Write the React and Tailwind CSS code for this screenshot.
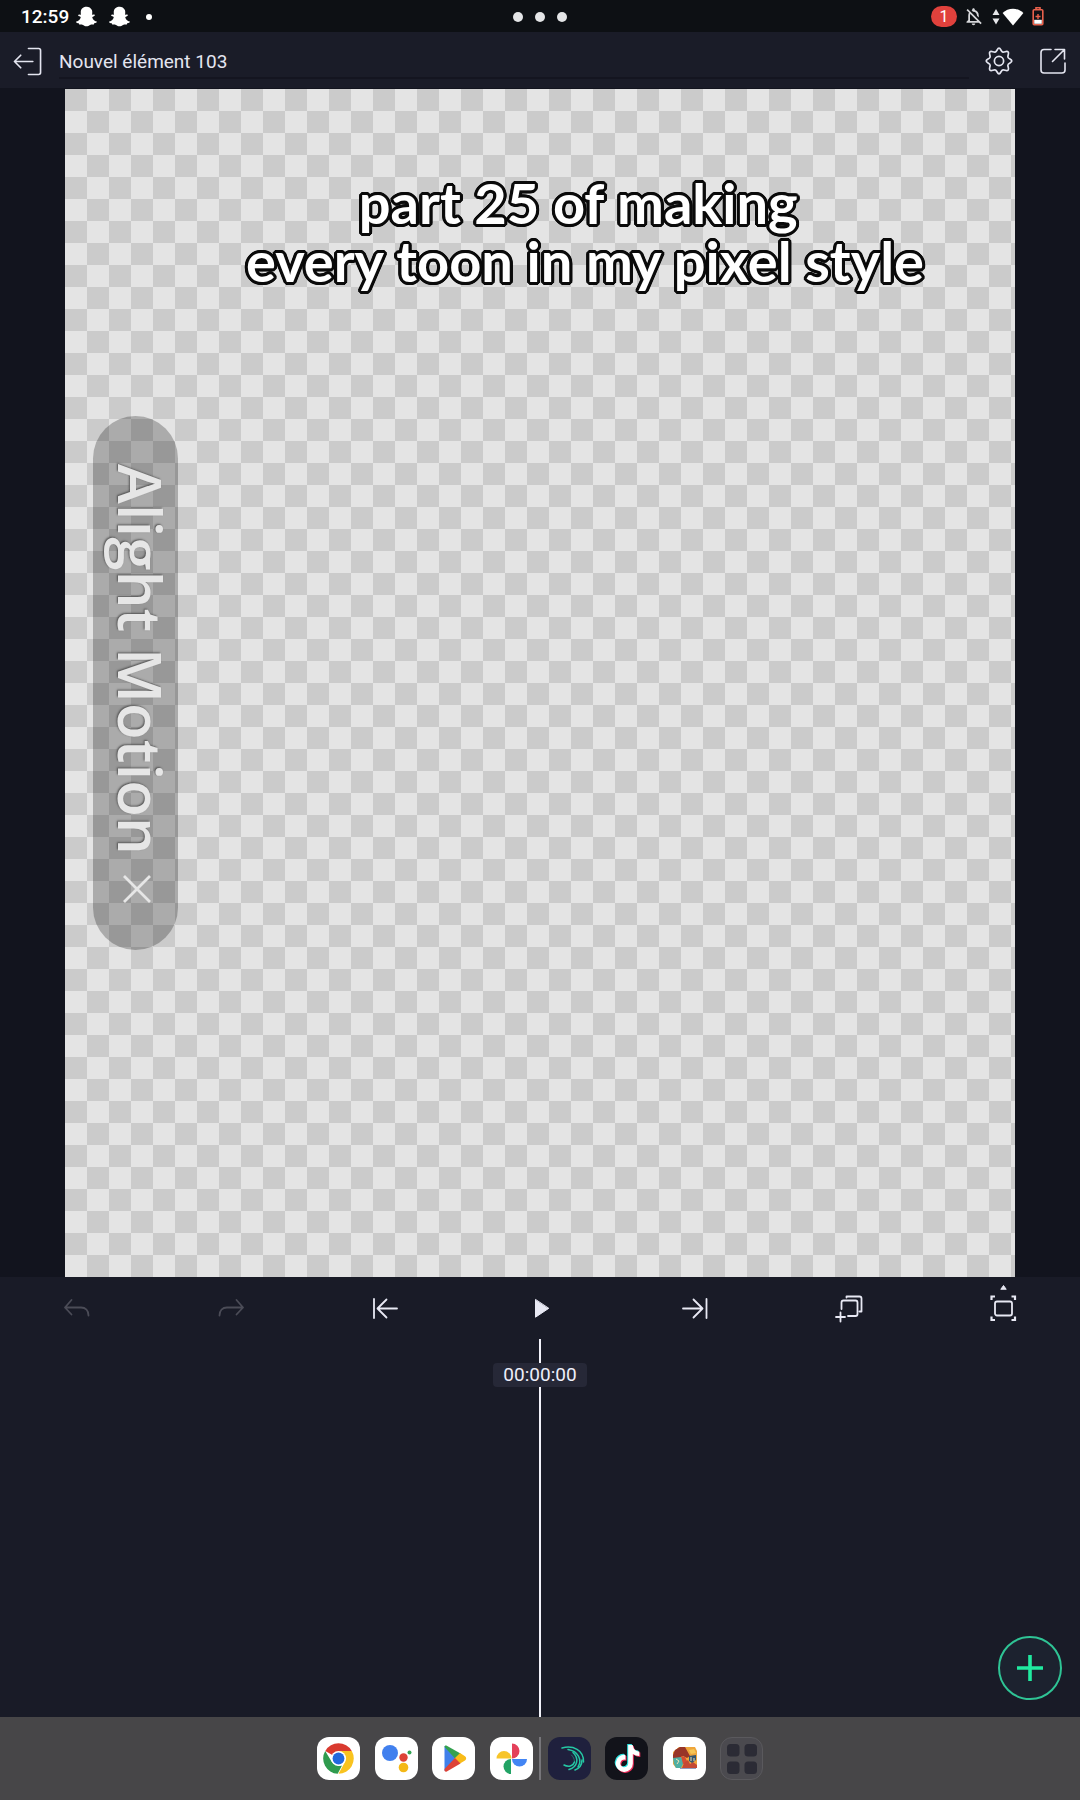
import React, { useState } from "react";
import { FaSnapchatGhost, FaTiktok } from "react-icons/fa";
import { MdOutlineNotificationsOff } from "react-icons/md";

const StatusBar = () => (
  <div className="grid h-8 grid-cols-3 items-center bg-[#0d1014] text-white">
    <div className="flex items-center pl-[21px]">
      <span className="pt-px text-[19px] leading-8 font-medium">12:59</span>
      <FaSnapchatGhost className="ml-[7px] size-[21px]" />
      <FaSnapchatGhost className="ml-3 size-[21px]" />
      <span className="ml-4 size-[6px] rounded-full bg-white" />
    </div>
    <div className="flex justify-center gap-3">
      <span className="size-[10px] rounded-full bg-[#e4e5e7]" />
      <span className="size-[10px] rounded-full bg-[#e4e5e7]" />
      <span className="size-[10px] rounded-full bg-[#e4e5e7]" />
    </div>
    <div className="flex items-center justify-end pr-9">
      <span className="flex h-[21px] w-[26px] items-center justify-center rounded-full bg-[#e0413c] text-[16px] leading-5">
        1
      </span>
      <MdOutlineNotificationsOff className="ml-[6px] size-[21px] text-[#d6d7da]" />
      <svg viewBox="0 0 8 18" className="ml-2 h-[18px] w-2" fill="#e6e7ea">
        <path d="M4 1L7.500 7H.5z M4 16.500L.5 10.500h7z" />
      </svg>
      <svg viewBox="0 0 22 18" className="ml-[2px] h-[18px] w-[22px]" fill="#fff">
        <path d="M11 17.500L.6 5C3.500 2.300 7 .8 11 .8S18.500 2.300 21.400 5z" />
      </svg>
      <svg viewBox="0 0 12 19" className="ml-2 h-[19px] w-3" fill="none">
        <path d="M4 2.500V.8h4v1.700" stroke="#e8614c" strokeWidth="1.600" />
        <rect x="1.200" y="2.800" width="9.600" height="15" rx="1" stroke="#e8614c" strokeWidth="1.600" />
        <path d="M6 7v5M3.500 9.500h5" stroke="#e8614c" strokeWidth="1.400" />
        <path d="M2.200 12.800h7.600v4H2.200z" fill="#fff" />
      </svg>
    </div>
  </div>
);

const Header = () => {
  const [title, setTitle] = useState("Nouvel élément 103");

  return (
    <header className="flex h-14 items-center bg-[#1a1c28] px-[13px] pt-[2px] text-[#e4e5f0]">
      <button aria-label="Retour">
        <svg viewBox="0 0 30 30" className="size-[29px]" fill="none" stroke="currentColor" strokeWidth="1.700" strokeLinecap="round" strokeLinejoin="round">
          <path d="M16 1.500h10.500a2 2 0 0 1 2 2v23a2 2 0 0 1-2 2H16M20.500 15H1.500M8 8.500L1.500 15 8 21.500" />
        </svg>
      </button>
      <input
        aria-label="Nom du projet"
        className="ml-[17px] h-9 min-w-0 flex-1 border-b-2 border-[#141520] bg-transparent pt-[2px] text-[19px] leading-8 outline-none"
        value={title}
        onChange={(e) => setTitle(e.target.value)}
      />
      <button aria-label="Réglages" className="ml-4">
        <svg viewBox="0 0 28 28" className="size-7" fill="none" stroke="currentColor" strokeWidth="1.700" strokeLinejoin="round">
          <circle cx="14" cy="14" r="4.600" />
          <path d="M14 1.200C15.800 1.200 15.900 4.700 17.900 5.100C19.600 5.500 21.800 3.500 23.100 4.900C24.500 6.200 22.500 8.400 22.900 10.100C23.300 12.100 26.800 12.200 26.800 14C26.800 15.800 23.300 15.900 22.900 17.900C22.500 19.600 24.500 21.800 23.100 23.100C21.800 24.500 19.600 22.500 17.900 22.900C15.900 23.300 15.800 26.800 14 26.800C12.200 26.800 12.100 23.300 10.100 22.900C8.400 22.500 6.200 24.500 4.900 23.100C3.500 21.800 5.500 19.600 5.100 17.900C4.700 15.900 1.200 15.800 1.200 14C1.200 12.200 4.700 12.100 5.100 10.100C5.500 8.400 3.500 6.200 4.900 4.900C6.200 3.500 8.400 5.500 10.100 5.100C12.100 4.700 12.200 1.200 14 1.200z" />
        </svg>
      </button>
      <button aria-label="Exporter" className="ml-[26px]">
        <svg viewBox="0 0 28 28" className="size-7" fill="none" stroke="currentColor" strokeWidth="1.600" strokeLinecap="round" strokeLinejoin="round">
          <path d="M12 2.500H5a3 3 0 0 0-3 3V23a3 3 0 0 0 3 3h18a3 3 0 0 0 3-3v-7M13.500 14.500L25.500 2.500M16 2.500h9.500V12" />
        </svg>
      </button>
    </header>
  );
};

const Canvas = () => (
  <main className="relative mx-[65px] mt-px aspect-[950/1188] overflow-hidden bg-[conic-gradient(#e4e4e4_25%,#cbcbcb_0_50%,#e4e4e4_0_75%,#cbcbcb_0)] bg-[size:44px_44px]">
    {/* légende de la vidéo */}
    <h1 className="pt-[85px] pl-[90px] text-center font-['Lato',sans-serif] text-[56px] leading-[58px] font-bold whitespace-pre text-white [text-shadow:3px_0_#0a0a0a,-3px_0_#0a0a0a,0_3px_#0a0a0a,0_-3px_#0a0a0a,3px_1px_#0a0a0a,3px_-1px_#0a0a0a,-3px_1px_#0a0a0a,-3px_-1px_#0a0a0a,1px_3px_#0a0a0a,-1px_3px_#0a0a0a,1px_-3px_#0a0a0a,-1px_-3px_#0a0a0a,2px_2px_#0a0a0a,-2px_2px_#0a0a0a,2px_-2px_#0a0a0a,-2px_-2px_#0a0a0a]">
      {"part 25 of making\u00a0\nevery toon in my pixel style"}
    </h1>
    {/* filigrane */}
    <div className="absolute top-[327px] left-7 flex h-[534px] w-[85px] flex-col items-center rounded-full bg-black/25 pt-12 pl-[2px] text-[#e6e6e6]">
      <span className="pl-2 font-['Open_Sans',sans-serif] text-[60px] leading-[85px] font-semibold [writing-mode:vertical-rl] [text-shadow:-1px_1px_2px_#555]">
        Alight Motion
      </span>
      <button aria-label="Retirer le filigrane" className="mt-5">
        <svg viewBox="0 0 28 28" className="size-7" fill="none" stroke="currentColor" strokeWidth="2.800">
          <path d="M1 1l26 26M27 1L1 27" />
        </svg>
      </button>
    </div>
  </main>
);

const ToolButton = ({ label, children, className = "text-[#e8e9f4]" }) => (
  <button aria-label={label} className={"flex h-[62px] items-center justify-center " + className}>
    <svg viewBox="0 0 32 48" className="h-12 w-8" fill="none" stroke="currentColor" strokeWidth="1.800" strokeLinecap="round" strokeLinejoin="round">
      {children}
    </svg>
  </button>
);

const Toolbar = () => (
  <div className="grid grid-cols-7">
    <ToolButton label="Annuler" className="text-[#4b4c57]">
      <path d="M10.500 16L4 23.500l6.500 7M4 23.500h16c4.500 0 7.500 3 7.500 8" />
    </ToolButton>
    <ToolButton label="Rétablir" className="text-[#4b4c57]">
      <path d="M21.500 16l6.500 7.500-6.500 7M28 23.500H12c-4.500 0-7.500 3-7.500 8" />
    </ToolButton>
    <ToolButton label="Aller au début">
      <path d="M4 15v19M27 24.500H8M16.500 15.500L7.500 24.500l9 9" />
    </ToolButton>
    <ToolButton label="Lecture">
      <path d="M11.500 15.800v17.400L24.500 24.500z" fill="currentColor" strokeWidth="1" />
    </ToolButton>
    <ToolButton label="Aller à la fin">
      <path d="M28.500 15v19M5 24.500h19M15.500 15.500l9 9-9 9" />
    </ToolButton>
    <ToolButton label="Dupliquer">
      <path d="M8.500 25v-6.500a2 2 0 0 1 2-2H22.500a2 2 0 0 1 2 2V30a2 2 0 0 1-2 2H15M13.500 13.500v-1h13a2 2 0 0 1 2 2v13h-2M7.500 28.500v9M3 33h9" />
    </ToolButton>
    <ToolButton label="Ajuster la vue">
      <path d="M14 5L16.500 1.500 19 5z" fill="currentColor" strokeWidth="1" />
      <rect x="8" y="17.500" width="17" height="14" rx="2" />
      <path d="M4.500 16v-3.500H8M24.500 12.500H28V16M28 32.500V36h-3.500M8 36H4.500v-3.500" strokeWidth="2.200" strokeLinecap="butt" strokeLinejoin="miter" />
    </ToolButton>
  </div>
);

const Timeline = () => (
  <section className="relative flex flex-1 flex-col items-center text-white">
    <div className="h-6 w-[2px] bg-[#f2f2fa]" />
    <time className="h-6 rounded-sm bg-[#262837] px-[10px] text-[19px] leading-6 text-[#eeeffa]">00:00:00</time>
    <div className="w-[2px] flex-1 bg-[#f2f2fa]" />
    <button
      aria-label="Ajouter"
      className="absolute right-[18px] bottom-[17px] flex size-16 items-center justify-center rounded-full border-2 border-[#2fc495] bg-[#1c222f] text-[#20eaa0]"
    >
      <svg viewBox="0 0 26 26" className="size-[26px]" stroke="currentColor" strokeWidth="3.600">
        <path d="M13 0v26M0 13h26" />
      </svg>
    </button>
  </section>
);

const AppIcon = ({ label, children, className = "bg-white" }) => (
  <button aria-label={label} className={"size-[43px] overflow-hidden rounded-xl " + className}>
    {children}
  </button>
);

const Dock = () => (
  <nav className="flex h-[83px] items-center justify-center bg-[#474648]">
    <div className="flex w-[446px] items-center justify-between">
      <AppIcon label="Chrome">
        <svg viewBox="0 0 43 43">
          <path d="M21.500 21.500L8.300 13.900A15.300 15.300 0 0 1 34.700 13.900z" fill="#d93a2f" />
          <path d="M21.500 14h13.300A15.300 15.300 0 0 1 21.500 36.800L28 25z" fill="#f9c31f" />
          <path d="M8.200 13.900L15 25.300l6.500 3.700 3.500-.5-4.300 8.300A15.300 15.300 0 0 1 8.200 13.900z" fill="#2f9b4e" />
          <circle cx="21.500" cy="21.500" r="7.600" fill="#fff" />
          <circle cx="21.500" cy="21.500" r="5.900" fill="#2268dd" />
        </svg>
      </AppIcon>
      <AppIcon label="Assistant">
        <svg viewBox="0 0 43 43">
          <circle cx="15" cy="16" r="8" fill="#4180ee" />
          <circle cx="28.500" cy="20.500" r="4.200" fill="#dd4336" />
          <circle cx="28.500" cy="30.500" r="4.800" fill="#f4b817" />
          <circle cx="34.500" cy="15.500" r="2" fill="#35a555" />
        </svg>
      </AppIcon>
      <AppIcon label="Play Store">
        <svg viewBox="0 0 43 43">
          <path d="M12.500 9v25L24 21.500z" fill="#3f7fea" />
          <path d="M12.500 10c0-1.500 1-2 2.300-1.300L28.500 16.500 23.500 22z" fill="#34a14f" />
          <path d="M28 16l5 3.200c1.600 1 1.600 3.200 0 4.200L28 26.600l-5.500-5z" fill="#f8bb18" />
          <path d="M12.500 33v-1L23 21l5.500 5.500-13.700 8c-1.300.6-2.300 0-2.300-1.500z" fill="#dd4237" />
        </svg>
      </AppIcon>
      <AppIcon label="Photos">
        <svg viewBox="0 0 43 43">
          <path d="M22 6.500a7.500 7.500 0 0 1 0 15z" fill="#e4405a" />
          <path d="M37 22a7.500 7.500 0 0 1-15 0z" fill="#4285f4" />
          <path d="M21 37a7.500 7.500 0 0 1 0-15z" fill="#22a365" />
          <path d="M6.500 21.500a7.500 7.500 0 0 1 15 0z" fill="#f7c52b" />
        </svg>
      </AppIcon>
      <span className="-mx-2 h-[43px] w-[2px] bg-[#77767a]" />
      <AppIcon label="Alight Motion" className="bg-[#1f203d]">
        <svg viewBox="0 0 43 43" fill="none" stroke="#25c7a4" strokeWidth="1.500" strokeLinecap="round">
          <path d="M14 11C25 8 36 13 35.500 25" />
          <path d="M20 12.500C30 14 34.500 23 30 30" />
          <path d="M25 15.500C31 21 30 30 21 32.500" />
          <path d="M23.500 18c4 4 3.500 8.500 1 11" strokeWidth="1" opacity=".5" />
          <path d="M26.500 25c-1.500 4-6 5.500-10.500 3" />
          <path d="M34 23c0 5-3 8.500-7 10" />
        </svg>
      </AppIcon>
      <AppIcon label="TikTok" className="bg-[#12131a]">
        <span className="relative flex size-full items-center justify-center">
          <FaTiktok className="absolute top-[7px] left-[8px] size-[27px] text-[#30e5e2]" />
          <FaTiktok className="absolute top-[9px] left-[10px] size-[27px] text-[#ee2c5a]" />
          <FaTiktok className="absolute top-[8px] left-[9px] size-[27px] text-white" />
        </span>
      </AppIcon>
      <AppIcon label="Jeu">
        <svg viewBox="0 0 43 43">
          <path d="M10 15l6-5h16l2 4v17H13l-3-4z" fill="#efa63b" />
          <path d="M10 18l2-5 5-3h5l5 9-3 2-4-2-5 3-5-1z" fill="#983528" />
          <path d="M10 21l8-1 3 5-3 6h-5l-2-4z" fill="#4eafa3" />
          <path d="M18 19l4 1 3 6-5 1z" fill="#d64b32" />
          <path d="M21 26l4-3 2 4 3-2 4 3v3H19z" fill="#c44934" />
          <path d="M26 19l7-1v5l-4 3-3-2z" fill="#34566f" />
          <path d="M26 13l5-1 2 4-5 1z" fill="#f7c655" />
          <path d="M13 22l3 2-2 3M28 20v4M31 21v3" stroke="#f3dfb3" strokeWidth="1" fill="none" />
          <path d="M17 31.500h16" stroke="#8f9cc0" strokeWidth="1" />
        </svg>
      </AppIcon>
      <AppIcon label="Toutes les applications" className="border border-[#5a595d] bg-[#4b4a4f]">
        <svg viewBox="0 0 41 41" fill="#2b2b35">
          <rect x="6" y="6" width="12.500" height="12.500" rx="3.500" />
          <rect x="23.500" y="6" width="12.500" height="12.500" rx="3.500" />
          <rect x="6" y="23.500" width="12.500" height="12.500" rx="3.500" />
          <rect x="23.500" y="23.500" width="12.500" height="12.500" rx="3.500" />
        </svg>
      </AppIcon>
    </div>
  </nav>
);

export default function App() {
  return (
    <div className="flex min-h-screen flex-col bg-[#191b27] font-['Roboto',sans-serif]">
      <StatusBar />
      <Header />
      <div className="bg-[#12141e]">
        <Canvas />
      </div>
      <Toolbar />
      <Timeline />
      <Dock />
    </div>
  );
}
